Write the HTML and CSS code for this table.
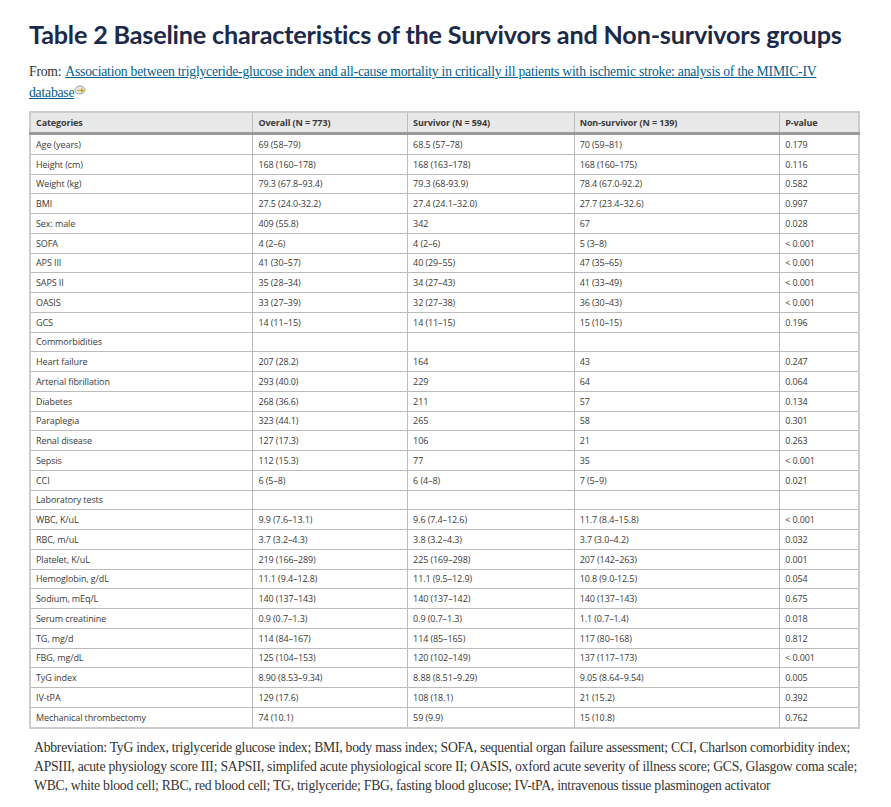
FILE: index.html
```html
<!DOCTYPE html>
<html>
<head>
<meta charset="utf-8">
<link rel="stylesheet" href="styles.css">
</head>
<body>
<div class="page">
  <h1 class="title">Table 2 Baseline characteristics of the Survivors and Non-survivors groups</h1>
  <p class="from"><span class="from-label">From:</span><a href="#">Association between triglyceride-glucose index and all-cause mortality in critically ill patients with ischemic stroke: analysis of the MIMIC-IV database</a><span class="ext"><svg width="13" height="10" viewBox="0 0 13 10"><ellipse cx="6" cy="5" rx="5" ry="4" fill="#e6e6e6" stroke="#9aa" stroke-width="1"/><path d="M3 5.5h6l-2-2M9 5.5l-2 2" fill="none" stroke="#d9a400" stroke-width="1.2"/></svg></span></p>
  <table class="data">
    <thead>
      <tr><th class="c1">Categories</th><th class="c2">Overall (N = 773)</th><th class="c3">Survivor (N = 594)</th><th class="c4">Non-survivor (N = 139)</th><th class="c5">P-value</th></tr>
    </thead>
    <tbody>
      <tr><td>Age (years)</td><td>69 (58–79)</td><td>68.5 (57–78)</td><td>70 (59–81)</td><td>0.179</td></tr>
      <tr><td>Height (cm)</td><td>168 (160–178)</td><td>168 (163–178)</td><td>168 (160–175)</td><td>0.116</td></tr>
      <tr><td>Weight (kg)</td><td>79.3 (67.8–93.4)</td><td>79.3 (68-93.9)</td><td>78.4 (67.0-92.2)</td><td>0.582</td></tr>
      <tr><td>BMI</td><td>27.5 (24.0-32.2)</td><td>27.4 (24.1–32.0)</td><td>27.7 (23.4–32.6)</td><td>0.997</td></tr>
      <tr><td>Sex: male</td><td>409 (55.8)</td><td>342</td><td>67</td><td>0.028</td></tr>
      <tr><td>SOFA</td><td>4 (2–6)</td><td>4 (2–6)</td><td>5 (3–8)</td><td>&lt; 0.001</td></tr>
      <tr><td>APS III</td><td>41 (30–57)</td><td>40 (29–55)</td><td>47 (35–65)</td><td>&lt; 0.001</td></tr>
      <tr><td>SAPS II</td><td>35 (28–34)</td><td>34 (27–43)</td><td>41 (33–49)</td><td>&lt; 0.001</td></tr>
      <tr><td>OASIS</td><td>33 (27–39)</td><td>32 (27–38)</td><td>36 (30–43)</td><td>&lt; 0.001</td></tr>
      <tr><td>GCS</td><td>14 (11–15)</td><td>14 (11–15)</td><td>15 (10–15)</td><td>0.196</td></tr>
      <tr><td>Commorbidities</td><td></td><td></td><td></td><td></td></tr>
      <tr><td>Heart failure</td><td>207 (28.2)</td><td>164</td><td>43</td><td>0.247</td></tr>
      <tr><td>Arterial fibrillation</td><td>293 (40.0)</td><td>229</td><td>64</td><td>0.064</td></tr>
      <tr><td>Diabetes</td><td>268 (36.6)</td><td>211</td><td>57</td><td>0.134</td></tr>
      <tr><td>Paraplegia</td><td>323 (44.1)</td><td>265</td><td>58</td><td>0.301</td></tr>
      <tr><td>Renal disease</td><td>127 (17.3)</td><td>106</td><td>21</td><td>0.263</td></tr>
      <tr><td>Sepsis</td><td>112 (15.3)</td><td>77</td><td>35</td><td>&lt; 0.001</td></tr>
      <tr><td>CCI</td><td>6 (5–8)</td><td>6 (4–8)</td><td>7 (5–9)</td><td>0.021</td></tr>
      <tr><td>Laboratory tests</td><td></td><td></td><td></td><td></td></tr>
      <tr><td>WBC, K/uL</td><td>9.9 (7.6–13.1)</td><td>9.6 (7.4–12.6)</td><td>11.7 (8.4–15.8)</td><td>&lt; 0.001</td></tr>
      <tr><td>RBC, m/uL</td><td>3.7 (3.2–4.3)</td><td>3.8 (3.2–4.3)</td><td>3.7 (3.0–4.2)</td><td>0.032</td></tr>
      <tr><td>Platelet, K/uL</td><td>219 (166–289)</td><td>225 (169–298)</td><td>207 (142–263)</td><td>0.001</td></tr>
      <tr><td>Hemoglobin, g/dL</td><td>11.1 (9.4–12.8)</td><td>11.1 (9.5–12.9)</td><td>10.8 (9.0-12.5)</td><td>0.054</td></tr>
      <tr><td>Sodium, mEq/L</td><td>140 (137–143)</td><td>140 (137–142)</td><td>140 (137–143)</td><td>0.675</td></tr>
      <tr><td>Serum creatinine</td><td>0.9 (0.7–1.3)</td><td>0.9 (0.7–1.3)</td><td>1.1 (0.7–1.4)</td><td>0.018</td></tr>
      <tr><td>TG, mg/d</td><td>114 (84–167)</td><td>114 (85–165)</td><td>117 (80–168)</td><td>0.812</td></tr>
      <tr><td>FBG, mg/dL</td><td>125 (104–153)</td><td>120 (102–149)</td><td>137 (117–173)</td><td>&lt; 0.001</td></tr>
      <tr><td>TyG index</td><td>8.90 (8.53–9.34)</td><td>8.88 (8.51–9.29)</td><td>9.05 (8.64–9.54)</td><td>0.005</td></tr>
      <tr><td>IV-tPA</td><td>129 (17.6)</td><td>108 (18.1)</td><td>21 (15.2)</td><td>0.392</td></tr>
      <tr><td>Mechanical thrombectomy</td><td>74 (10.1)</td><td>59 (9.9)</td><td>15 (10.8)</td><td>0.762</td></tr>
    </tbody>
  </table>
  <p class="note">Abbreviation: TyG index, triglyceride glucose index; BMI, body mass index; SOFA, sequential organ failure assessment; CCI, Charlson comorbidity index; APSIII, acute physiology score III; SAPSII, simplifed acute physiological score II; OASIS, oxford acute severity of illness score; GCS, Glasgow coma scale; WBC, white blood cell; RBC, red blood cell; TG, triglyceride; FBG, fasting blood glucose; IV-tPA, intravenous tissue plasminogen activator</p>
</div>
</body>
</html>
```

FILE: styles.css
```css
html, body {
  margin: 0;
  padding: 0;
  background: #ffffff;
}
.page {
  padding: 18px 31px 0 29px;
}
.title {
  margin: 0;
  font-family: Lato, "Open Sans", sans-serif;
  font-weight: 700;
  font-size: 25.2px;
  line-height: 32px;
  color: #1b2a48;
  letter-spacing: -0.18px;
}
.from {
  margin: 12px 0 0 0;
  font-family: "Liberation Serif", serif;
  font-size: 13.7px;
  line-height: 19px;
  color: #333333;
  letter-spacing: -0.23px;
}
.from-label {
  margin-right: 4px;
}
.from a {
  color: #025e8d;
  text-decoration: underline;
}
.ext {
  display: inline-block;
  vertical-align: 2px;
}
.data {
  margin-top: 9px;
  width: 831px;
  border-collapse: collapse;
  border: 2px solid #cccccc;
  font-family: "Open Sans", sans-serif;
  font-size: 9px;
  color: #3a3a3a;
  letter-spacing: -0.1px;
}
.data th, .data td {
  border: 1px solid #bbbbbb;
  text-align: left;
  padding: 0 5px;
  height: 18.76px;
  white-space: nowrap;
}
.data th {
  background: #e8e8e8;
  font-weight: 700;
  height: 19px;
  border-bottom: 3px solid #999999;
}
.c1 { width: 212px; }
.c2 { width: 144px; }
.c3 { width: 156px; }
.c4 { width: 195px; }
.c5 { width: 68px; }
.note {
  margin: 9px 0 0 5px;
  font-family: "Liberation Serif", serif;
  font-size: 13.7px;
  line-height: 19px;
  color: #333333;
  letter-spacing: -0.25px;
}
```
